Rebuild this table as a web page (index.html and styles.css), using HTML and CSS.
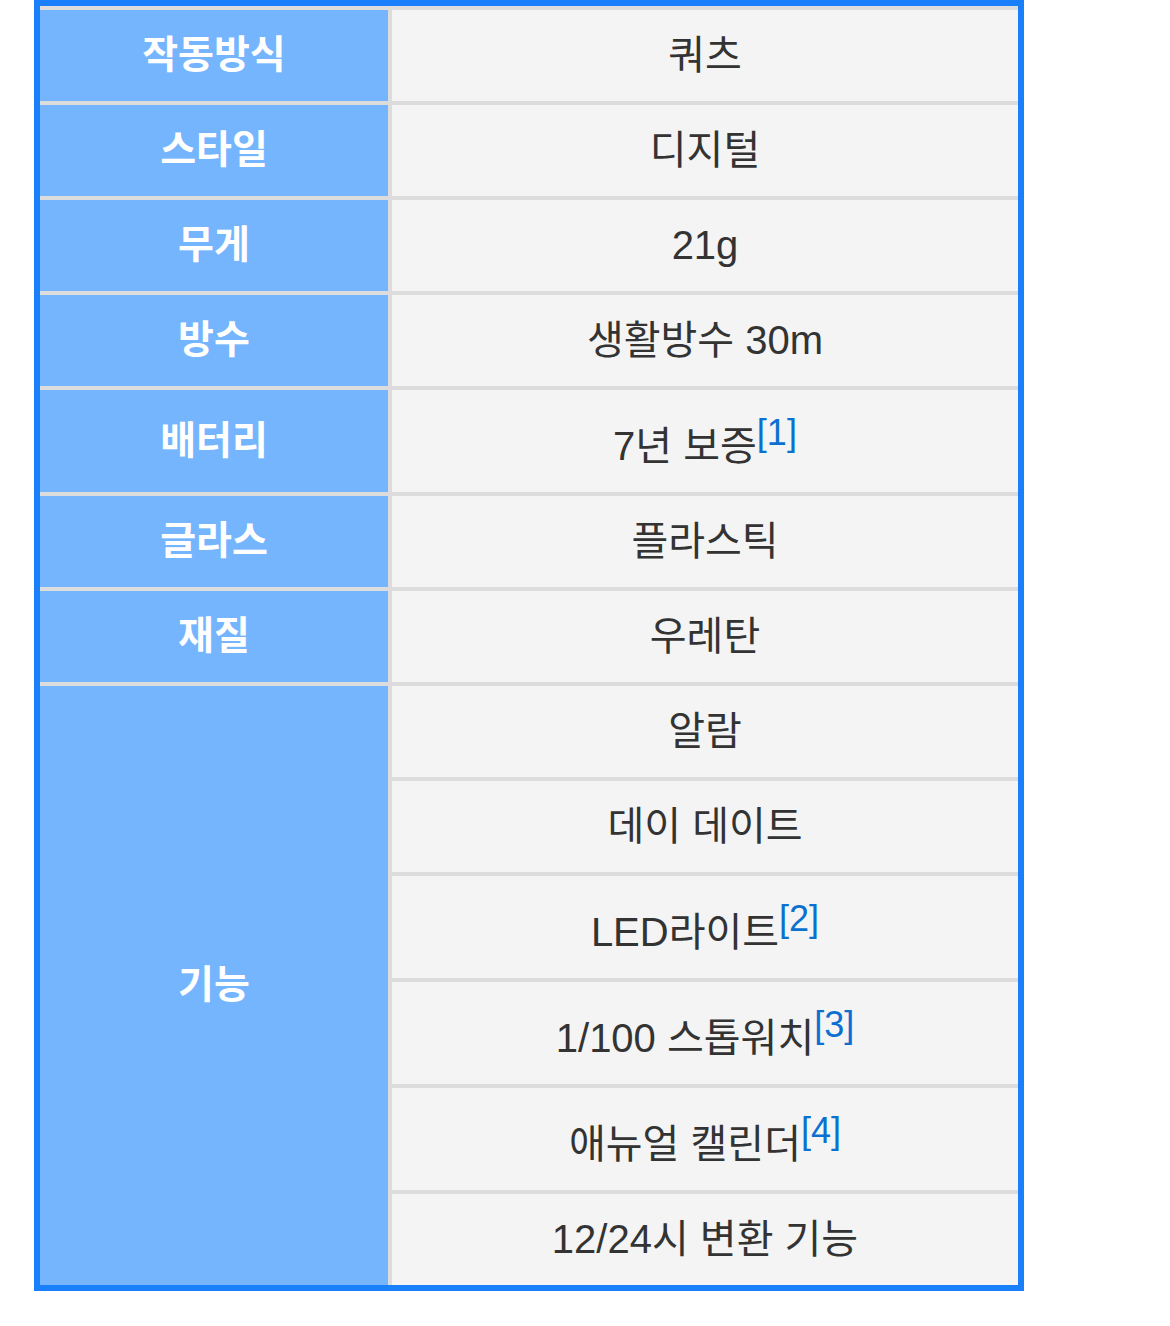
FILE: index.html
```html
<!DOCTYPE html>
<html lang="ko">
<head>
<meta charset="utf-8">
<link rel="stylesheet" href="styles.css">
</head>
<body>
<div class="page">
  <div class="frame">
    <table class="spec">
      <colgroup><col class="c-head"><col class="c-val"></colgroup>
      <tbody>
        <tr><th>작동방식</th><td>쿼츠</td></tr>
        <tr><th>스타일</th><td>디지털</td></tr>
        <tr><th>무게</th><td>21g</td></tr>
        <tr><th>방수</th><td>생활방수 30m</td></tr>
        <tr><th>배터리</th><td class="tall">7년 보증<sup class="ref">[1]</sup></td></tr>
        <tr><th>글라스</th><td>플라스틱</td></tr>
        <tr><th>재질</th><td>우레탄</td></tr>
        <tr><th rowspan="6">기능</th><td>알람</td></tr>
        <tr><td>데이 데이트</td></tr>
        <tr><td class="tall">LED라이트<sup class="ref">[2]</sup></td></tr>
        <tr><td class="tall">1/100 스톱워치<sup class="ref">[3]</sup></td></tr>
        <tr><td class="tall">애뉴얼 캘린더<sup class="ref">[4]</sup></td></tr>
        <tr><td>12/24시 변환 기능</td></tr>
      </tbody>
    </table>
  </div>
</div>
</body>
</html>
```

FILE: styles.css
```css
html, body {
  margin: 0;
  padding: 0;
  background: #ffffff;
}

.page {
  padding: 0 0 0 34px;
}

.frame {
  width: 978px;
  border: 6px solid #1a7ffa;
}

.spec {
  width: 100%;
  border-collapse: separate;
  border-spacing: 0;
  table-layout: fixed;
  font-family: "Liberation Sans", "Noto Sans CJK KR", sans-serif;
}

.c-head { width: 352px; }

.spec th,
.spec td {
  border-top: 4px solid #dcdcdc;
  text-align: center;
  vertical-align: middle;
  padding: 21px 0 22px;
  line-height: 48px;
}

.spec th {
  background: #74b5fe;
  color: #ffffff;
  font-weight: 700;
  font-size: 39px;
  border-right: 4px solid #dcdcdc;
}

.spec td {
  background: #f4f4f4;
  color: #333333;
  font-size: 40px;
  font-weight: 400;
}

.spec td.tall {
  padding-top: 32px;
  padding-bottom: 22px;
}

.ref {
  color: #0b70d0;
  font-size: 36px;
  line-height: 0;
  vertical-align: 15px;
}
```
